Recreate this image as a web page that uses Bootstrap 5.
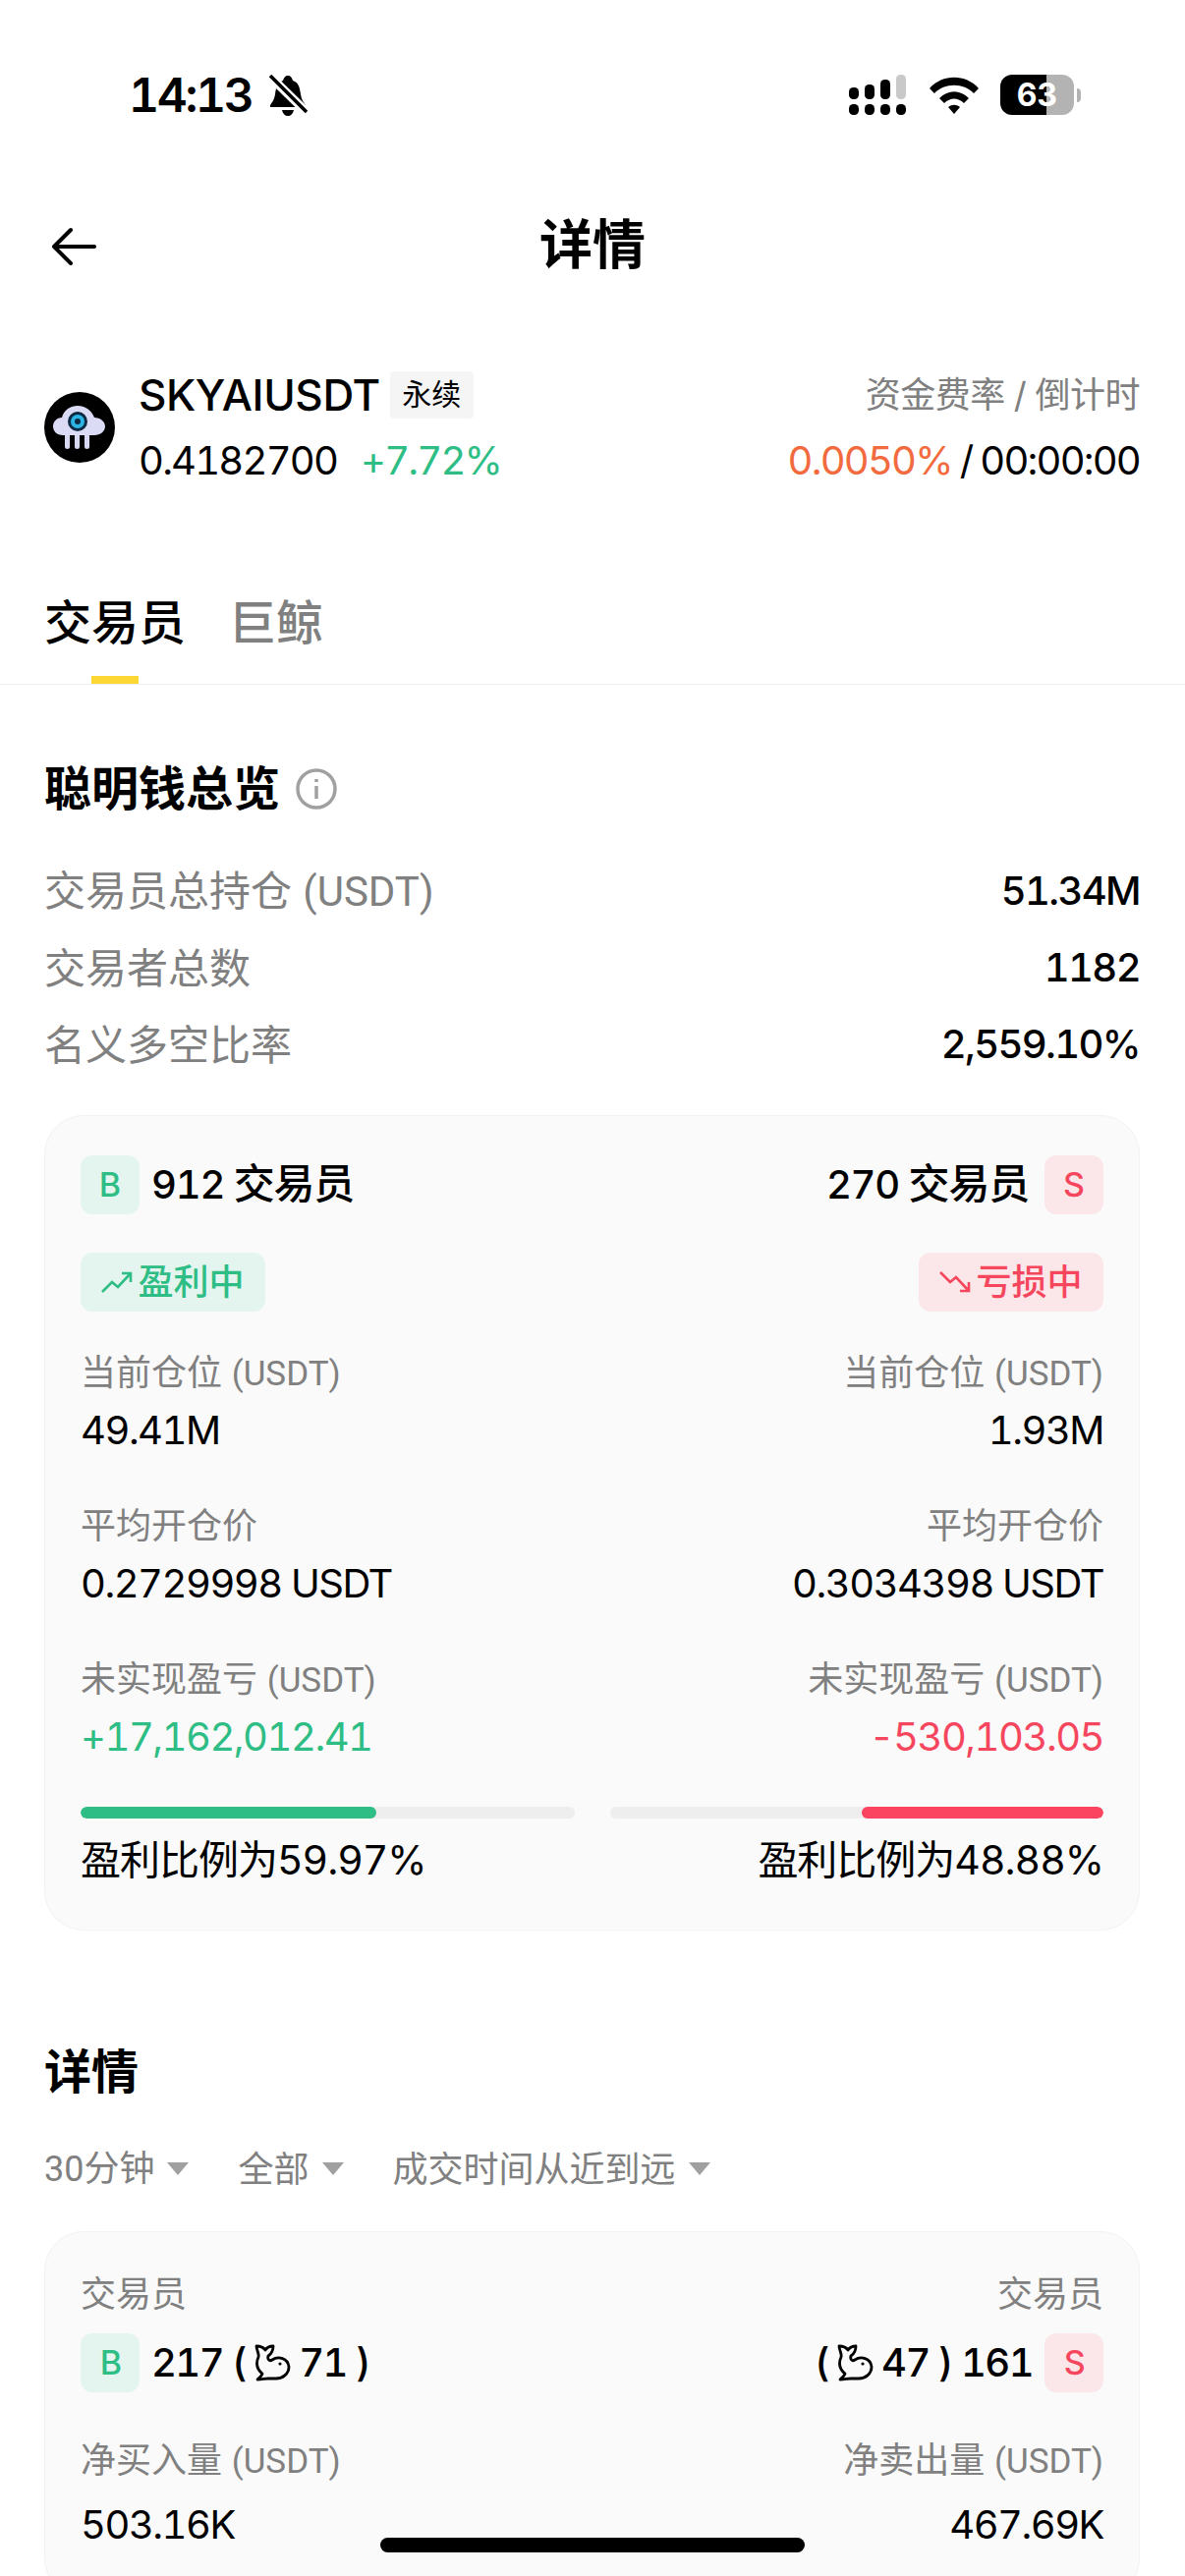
<!DOCTYPE html>
<html lang="zh">
<head>
  <meta charset="UTF-8">
  <meta name="viewport" content="width=device-width, initial-scale=1.0">
  <title>详情</title>
  <link href="https://cdn.jsdelivr.net/npm/bootstrap@5.3.1/dist/css/bootstrap.min.css" rel="stylesheet">
  <style>
    html, body {
      height: 2622px;
      overflow: hidden;
    }
    body {
      background-color: #fff;
      color: #000;
      font-family: "Inter", "Noto Sans CJK SC", sans-serif;
      font-variant-numeric: tabular-nums;
    }
    .unit-text {
      font-family: "Roboto", "Noto Sans CJK SC", sans-serif;
    }
    .status-strip {
      height: 196px;
      padding: 0 106px 3px 131px;
    }
    .clock {
      font-size: 48px;
      font-weight: 600;
      line-height: 1;
      letter-spacing: -2.3px;
    }
    .battery-box {
      width: 75px;
      height: 41px;
      margin-left: 22px;
      border-radius: 12px;
      background: linear-gradient(90deg, #000 0 63%, #b3b3b3 63%);
      color: #fff;
      font-size: 32px;
      font-weight: 700;
    }
    .battery-nub {
      width: 4px;
      height: 14px;
      margin-left: 3px;
      background: #b3b3b3;
      border-radius: 0 4px 4px 0;
    }
    .top-nav {
      height: 108px;
      padding: 2px 0 0 52px;
    }
    .top-nav-title {
      font-size: 54px;
      font-weight: 700;
      line-height: 1;
    }
    .coin-row {
      margin-top: 64px;
      padding: 0 46px 0 45px;
    }
    .coin-line {
      height: 67px;
    }
    .coin-name {
      font-size: 44px;
      font-weight: 500;
      letter-spacing: -.4px;
    }
    .perp-tag {
      width: 85px;
      height: 48px;
      margin-left: 10px;
      background: #f5f5f5;
      border-radius: 4px;
      font-size: 30px;
    }
    .num-text {
      font-size: 40px;
      letter-spacing: -1.8px;
    }
    .gray-36 {
      font-size: 36px;
      color: #808080;
      letter-spacing: -.5px;
    }
    .tab-strip {
      margin-top: 102px;
      height: 93px;
      padding-left: 45px;
      gap: 44px;
      border-bottom: 1px solid #eee;
    }
    .tab-entry {
      font-size: 48px;
      font-weight: 500;
      line-height: 60px;
      color: #808080;
    }
    .tab-entry.is-on {
      color: #000;
    }
    .tab-mark {
      width: 48px;
      height: 8px;
      margin-top: 24px;
      background: #fdd835;
    }
    .sect {
      padding: 0 46px 0 45px;
    }
    .sect-title {
      font-size: 48px;
      font-weight: 700;
      line-height: 60px;
    }
    .stat-line {
      height: 78px;
    }
    .stat-label {
      font-size: 42px;
      color: #808080;
    }
    .stat-value {
      font-size: 40px;
      font-weight: 500;
      letter-spacing: -1.6px;
    }
    .panel {
      background: #fafafa;
      border: 1px solid #f2f2f2;
      border-radius: 40px;
      padding: 39px 36px 40px;
    }
    .side-tag {
      width: 60px;
      height: 60px;
      border-radius: 12px;
      font-size: 34px;
      font-weight: 500;
    }
    .tag-buy {
      background: #e3f5ee;
      color: #2ebd85;
    }
    .tag-sell {
      background: #fbe6ea;
      color: #f6465d;
    }
    .side-count {
      font-size: 40px;
      font-weight: 500;
      line-height: 60px;
      letter-spacing: -1.2px;
    }
    .side-word {
      font-size: 42px;
    }
    .pnl-tag {
      width: 188px;
      height: 60px;
      border-radius: 12px;
      font-size: 36px;
      font-weight: 500;
      gap: 5px;
    }
    .field-block {
      margin-top: 40px;
    }
    .field-label {
      height: 50px;
      font-size: 36px;
      line-height: 48px;
      color: #808080;
    }
    .field-label .unit-text {
      font-size: 35px;
    }
    .field-value {
      font-size: 40px;
      line-height: 66px;
      letter-spacing: -1.5px;
    }
    .text-up {
      color: #2ebd85;
    }
    .text-down {
      color: #f6465d;
    }
    .text-rate {
      color: #f26a3d;
    }
    .bar-pair {
      gap: 36px;
      margin-top: 38px;
    }
    .pnl-bar {
      --bs-progress-height: 12px;
      --bs-progress-bg: #eee;
      --bs-progress-border-radius: 6px;
    }
    .fill-up {
      background-color: #2ebd85;
      border-radius: 6px;
    }
    .fill-down {
      background-color: #fb4560;
      border-radius: 6px;
    }
    .ratio-text {
      font-size: 41px;
      line-height: 58px;
      margin-top: 13px;
      margin-bottom: 2px;
      letter-spacing: -1px;
    }
    .filter-strip {
      gap: 50px;
      margin-top: 43px;
      margin-bottom: 38px;
    }
    .filter-item {
      font-size: 36px;
      line-height: 50px;
      color: #808080;
      gap: 13px;
    }
    .caret-mark {
      width: 0;
      height: 0;
      border-left: 11px solid transparent;
      border-right: 11px solid transparent;
      border-top: 13px solid #a0a0a0;
    }
    .whale-count {
      font-size: 40px;
      font-weight: 500;
      line-height: 60px;
      letter-spacing: -1.6px;
    }
    .home-bar {
      position: fixed;
      left: 387px;
      top: 2583px;
      width: 432px;
      height: 15px;
      background: #000;
      border-radius: 8px;
    }
  </style>
</head>
<body>
  <div class="status-strip d-flex align-items-center justify-content-between">
    <div class="d-flex align-items-center gap-3">
      <span class="clock">14:13</span>
      <svg width="40" height="42" viewBox="0 0 40 42">
        <path d="M20 1c3 0 4 2 5 5 6 2 7 7 8 14 1 6 3 8 5 11v2H2v-2c2-3 4-5 5-11 1-7 2-12 8-14 1-3 2-5 5-5z" fill="#000"/>
        <path d="M14 36h12c-1 4-3 6-6 6s-5-2-6-6z" fill="#000"/>
        <path d="M1 1l38 37" stroke="#fff" stroke-width="9"/>
        <path d="M2 1l37 37" stroke="#000" stroke-width="3.5"/>
      </svg>
    </div>
    <div class="d-flex align-items-center">
      <svg width="58" height="41" viewBox="0 0 58 41">
        <rect x="0" y="13" width="10" height="12" rx="4.5"/>
        <rect x="16" y="10" width="10" height="15" rx="4.5"/>
        <rect x="32" y="5" width="10" height="20" rx="4.5"/>
        <rect x="48" y="0" width="10" height="25" rx="4.5" fill="#c9c9c9"/>
        <rect x="0" y="30" width="10" height="11" rx="4.5"/>
        <rect x="16" y="30" width="10" height="11" rx="4.5"/>
        <rect x="32" y="30" width="10" height="11" rx="4.5"/>
        <rect x="48" y="30" width="10" height="11" rx="4.5"/>
      </svg>
      <svg class="ms-4" width="50" height="38" viewBox="0 0 50 38">
        <path d="M0 12C13-3 37-3 50 12l-5 5C35 6 15 6 5 17z"/>
        <path d="M10 22c9-9 21-9 30 0l-5 5c-6-6-14-6-20 0z"/>
        <path d="M19 31c4-3 8-3 12 0l-6 7z"/>
      </svg>
      <div class="battery-box d-flex align-items-center justify-content-center">63</div>
      <div class="battery-nub"></div>
    </div>
  </div>

  <div class="top-nav position-relative d-flex align-items-center">
    <svg width="46" height="40" viewBox="0 0 46 40" fill="none" stroke="#000" stroke-width="4" stroke-linecap="round" stroke-linejoin="round">
      <path d="M20 3L3 20l17 17M3 20h41"/>
    </svg>
    <div class="top-nav-title position-absolute top-50 start-50 translate-middle">详情</div>
  </div>

  <div class="coin-row d-flex align-items-center justify-content-between">
    <div class="d-flex align-items-center">
      <svg class="me-4" width="72" height="72" viewBox="0 0 72 72">
        <circle cx="36" cy="36" r="36" fill="#000"/>
        <rect x="21" y="40" width="5" height="18" rx="2.5" fill="#d9d8f2"/>
        <rect x="31" y="42" width="5" height="16" rx="2.5" fill="#d9d8f2"/>
        <rect x="41" y="42" width="5" height="16" rx="2.5" fill="#d9d8f2"/>
        <path d="M18 26c2-8 9-12 16-12s14 4 17 12c6 0 11 4 11 9s-5 9-11 9H19c-6 0-10-4-10-9s4-9 9-9z" fill="#dcdbf5"/>
        <circle cx="34" cy="30" r="10" fill="#0d2a44"/>
        <circle cx="34" cy="30" r="7" fill="#2bb4e4"/>
        <circle cx="34" cy="30" r="3" fill="#0d2a44"/>
      </svg>
      <div>
        <div class="coin-line d-flex align-items-center">
          <span class="coin-name">SKYAIUSDT</span>
          <span class="perp-tag d-flex align-items-center justify-content-center">永续</span>
        </div>
        <div class="coin-line d-flex align-items-center gap-4 num-text">
          <span>0.4182700</span>
          <span class="text-up">+7.72%</span>
        </div>
      </div>
    </div>
    <div class="text-end">
      <div class="coin-line d-flex align-items-center justify-content-end gray-36">资金费率 / 倒计时</div>
      <div class="coin-line d-flex align-items-center justify-content-end num-text">
        <span class="text-rate">0.0050%</span><span class="mx-2">/</span><span>00:00:00</span>
      </div>
    </div>
  </div>

  <div class="tab-strip d-flex">
    <div class="tab-entry is-on d-flex flex-column align-items-center">
      <span>交易员</span>
      <span class="tab-mark"></span>
    </div>
    <div class="tab-entry">巨鲸</div>
  </div>

  <div class="sect">
    <div class="sect-title d-flex align-items-center gap-3" style="margin-top:76px">
      <span>聪明钱总览</span>
      <svg width="42" height="42" viewBox="0 0 42 42" fill="none" stroke="#a0a0a0" stroke-width="3.5">
        <circle cx="21" cy="21" r="19"/>
        <path d="M21 18v13"/>
        <path d="M21 11v3"/>
      </svg>
    </div>

    <div style="margin-top:35px;margin-bottom:33px">
      <div class="stat-line d-flex align-items-center justify-content-between">
        <span class="stat-label">交易员总持仓 <span class="unit-text">(USDT)</span></span>
        <span class="stat-value">51.34M</span>
      </div>
      <div class="stat-line d-flex align-items-center justify-content-between">
        <span class="stat-label">交易者总数</span>
        <span class="stat-value">1182</span>
      </div>
      <div class="stat-line d-flex align-items-center justify-content-between">
        <span class="stat-label">名义多空比率</span>
        <span class="stat-value">2,559.10%</span>
      </div>
    </div>

    <div class="panel">
      <div class="d-flex justify-content-between">
        <div class="d-flex align-items-center gap-2">
          <span class="side-tag tag-buy d-flex align-items-center justify-content-center">B</span>
          <span class="side-count ms-1">912 <span class="side-word">交易员</span></span>
        </div>
        <div class="d-flex align-items-center gap-3">
          <span class="side-count">270 <span class="side-word">交易员</span></span>
          <span class="side-tag tag-sell d-flex align-items-center justify-content-center">S</span>
        </div>
      </div>
      <div class="d-flex justify-content-between" style="margin-top:39px;margin-bottom:-2px">
        <span class="pnl-tag tag-buy d-flex align-items-center justify-content-center">
          <svg width="32" height="24" viewBox="0 0 32 24" fill="none" stroke="#2ebd85" stroke-width="2.6">
            <path d="M1 22l10-10 6 5L30 3M21 3h9v9"/>
          </svg>盈利中</span>
        <span class="pnl-tag tag-sell d-flex align-items-center justify-content-center">
          <svg width="32" height="24" viewBox="0 0 32 24" fill="none" stroke="#f6465d" stroke-width="2.6">
            <path d="M1 2l10 10 6-5 13 14M21 21h9v-9"/>
          </svg>亏损中</span>
      </div>

      <div class="d-flex justify-content-between field-block">
        <div>
          <div class="field-label">当前仓位 <span class="unit-text">(USDT)</span></div>
          <div class="field-value">49.41M</div>
        </div>
        <div class="text-end">
          <div class="field-label">当前仓位 <span class="unit-text">(USDT)</span></div>
          <div class="field-value">1.93M</div>
        </div>
      </div>
      <div class="d-flex justify-content-between field-block">
        <div>
          <div class="field-label">平均开仓价</div>
          <div class="field-value">0.2729998 USDT</div>
        </div>
        <div class="text-end">
          <div class="field-label">平均开仓价</div>
          <div class="field-value">0.3034398 USDT</div>
        </div>
      </div>
      <div class="d-flex justify-content-between field-block">
        <div>
          <div class="field-label">未实现盈亏 <span class="unit-text">(USDT)</span></div>
          <div class="field-value text-up">+17,162,012.41</div>
        </div>
        <div class="text-end">
          <div class="field-label">未实现盈亏 <span class="unit-text">(USDT)</span></div>
          <div class="field-value text-down">-530,103.05</div>
        </div>
      </div>

      <div class="d-flex bar-pair">
        <div class="progress pnl-bar flex-fill w-50">
          <div class="progress-bar fill-up" style="width:59.97%"></div>
        </div>
        <div class="progress pnl-bar flex-fill w-50 justify-content-end">
          <div class="progress-bar fill-down" style="width:48.88%"></div>
        </div>
      </div>
      <div class="d-flex justify-content-between ratio-text">
        <span>盈利比例为59.97%</span>
        <span>盈利比例为48.88%</span>
      </div>
    </div>

    <div class="sect-title" style="margin-top:114px">详情</div>
    <div class="d-flex filter-strip">
      <div class="filter-item d-flex align-items-center"><span><span class="unit-text">30</span>分钟</span><span class="caret-mark"></span></div>
      <div class="filter-item d-flex align-items-center"><span>全部</span><span class="caret-mark"></span></div>
      <div class="filter-item d-flex align-items-center"><span>成交时间从近到远</span><span class="caret-mark"></span></div>
    </div>

    <div class="panel">
      <div class="d-flex justify-content-between">
        <span class="field-label">交易员</span>
        <span class="field-label">交易员</span>
      </div>
      <div class="d-flex justify-content-between" style="margin-top:14px">
        <div class="d-flex align-items-center whale-count gap-2">
          <span class="side-tag tag-buy d-flex align-items-center justify-content-center me-1">B</span>
          <span>217 (</span>
          <svg width="38" height="38" viewBox="0 0 38 38" fill="none" stroke="#000" stroke-width="2.8" stroke-linejoin="round">
            <path d="M3 2C7 2 10 3 12 6 14 3 17 2 20 2 20 7 18 10 15 12 14 15 16 18 19 16 25 12 35 14 36 23 36 30 30 35 23 35H15C12 35 8 36 4 36 6 34 8 33 9 30 4 26 2 20 5 13 6 10 3 6 3 2Z"/>
            <circle cx="27" cy="20" r="1.6" fill="#000" stroke="none"/>
          </svg>
          <span>71 )</span>
        </div>
        <div class="d-flex align-items-center whale-count gap-2">
          <span>(</span>
          <svg width="38" height="38" viewBox="0 0 38 38" fill="none" stroke="#000" stroke-width="2.8" stroke-linejoin="round">
            <path d="M3 2C7 2 10 3 12 6 14 3 17 2 20 2 20 7 18 10 15 12 14 15 16 18 19 16 25 12 35 14 36 23 36 30 30 35 23 35H15C12 35 8 36 4 36 6 34 8 33 9 30 4 26 2 20 5 13 6 10 3 6 3 2Z"/>
            <circle cx="27" cy="20" r="1.6" fill="#000" stroke="none"/>
          </svg>
          <span>47 ) 161</span>
          <span class="side-tag tag-sell d-flex align-items-center justify-content-center ms-1">S</span>
        </div>
      </div>
      <div class="d-flex justify-content-between" style="margin-top:45px">
        <div>
          <div class="field-label">净买入量 <span class="unit-text">(USDT)</span></div>
          <div class="field-value" style="margin-top:7px">503.16K</div>
        </div>
        <div class="text-end">
          <div class="field-label">净卖出量 <span class="unit-text">(USDT)</span></div>
          <div class="field-value" style="margin-top:7px">467.69K</div>
        </div>
      </div>
    </div>
  </div>

  <div class="home-bar"></div>

  <script src="https://cdn.jsdelivr.net/npm/bootstrap@5.3.1/dist/js/bootstrap.bundle.min.js"></script>
</body>
</html>
